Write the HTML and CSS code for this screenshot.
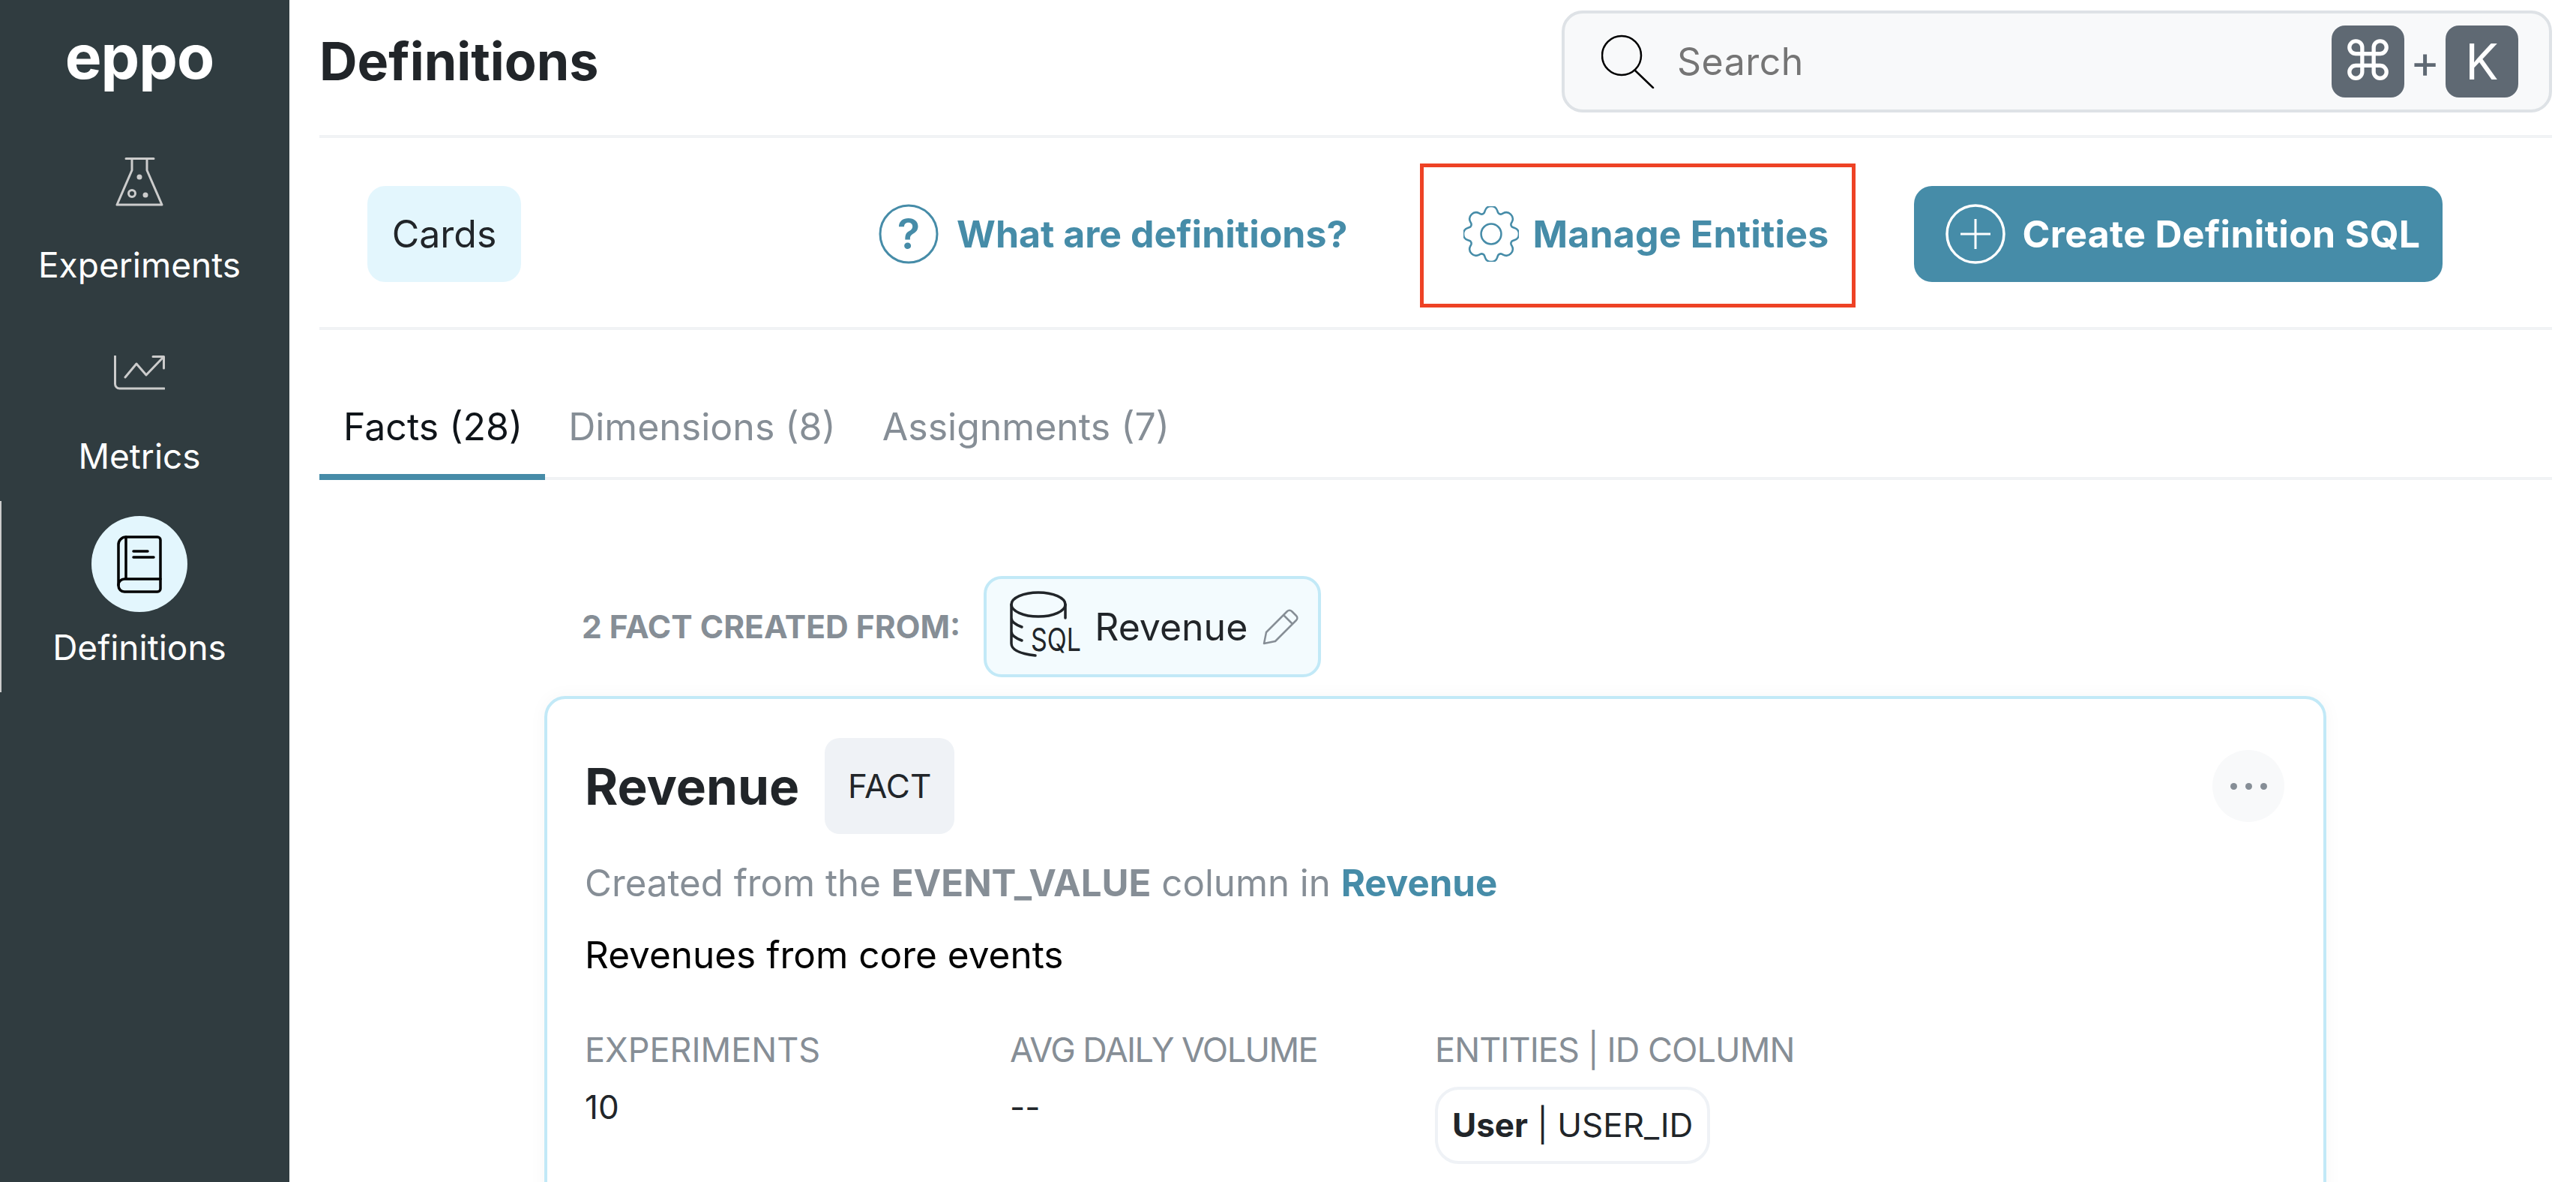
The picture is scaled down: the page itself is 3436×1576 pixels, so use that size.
FILE: index.html
```html
<!DOCTYPE html>
<html lang="en">
<head>
  <meta charset="UTF-8">
  <title>Definitions</title>
  <link rel="stylesheet" href="styles.css">
</head>
<body>
  <aside class="sidebar">
    <div class="logo">eppo</div>
    <nav class="nav">
      <a class="nav-item">
        <span class="nav-icon">
          <svg width="64" height="65" viewBox="0 0 64 65" fill="none" stroke="#ccc" stroke-width="3" stroke-linecap="round" stroke-linejoin="round">
            <path d="M14 1.5H51M22 2V17L2 63H62L42 17V2"/>
            <circle cx="32" cy="26" r="3.5" fill="#ccc" stroke="none"/>
            <circle cx="22" cy="48" r="4.5"/>
            <circle cx="40" cy="50" r="3.5" fill="#ccc" stroke="none"/>
          </svg>
        </span>
        <span class="nav-label">Experiments</span>
      </a>
      <a class="nav-item">
        <span class="nav-icon">
          <svg width="68" height="46" viewBox="0 0 68 46" fill="none" stroke="#ccc" stroke-width="3" stroke-linecap="round" stroke-linejoin="round">
            <path d="M1.5 1V38a6 6 0 0 0 6 6H67"/>
            <path d="M15 29L30 11L43 26L66 2M52 1.5H66.5V17"/>
          </svg>
        </span>
        <span class="nav-label">Metrics</span>
      </a>
      <a class="nav-item active">
        <span class="nav-icon">
          <svg width="62" height="77" viewBox="0 0 62 77" fill="none" stroke="#000" stroke-width="3.5" stroke-linecap="round" stroke-linejoin="round">
            <path d="M13 2H55a4 4 0 0 1 4 4V71a4 4 0 0 1-4 4H11a8 8 0 0 1-8-8V12A10 10 0 0 1 13 2Z"/>
            <path d="M13 2V58M59 58H11a8 8 0 0 0-8 8M23 21H42M23 29H50"/>
          </svg>
        </span>
        <span class="nav-label">Definitions</span>
      </a>
    </nav>
  </aside>

  <main class="main">
    <header class="topbar">
      <h1 class="page-title">Definitions</h1>
      <div class="search">
        <svg class="search-icon" width="72" height="72" viewBox="0 0 72 72" fill="none" stroke="#000" stroke-width="2.5" stroke-linecap="round">
          <circle cx="27" cy="28" r="26"/>
          <path d="M45 48L69 71"/>
        </svg>
        <span class="search-text">Search</span>
        <span class="key key-cmd">⌘</span>
        <span class="key-plus">+</span>
        <span class="key">K</span>
      </div>
    </header>

    <div class="toolbar">
      <span class="view-btn">Cards</span>
      <a class="link help-link">
        <svg width="80" height="80" viewBox="0 0 80 80" fill="none" stroke="#468ca8" stroke-width="3">
          <circle cx="40" cy="40" r="38"/>
          <text x="40" y="60" text-anchor="middle" class="icon-q">?</text>
        </svg>
        What are definitions?
      </a>
      <a class="link manage-link">
        <svg width="74" height="74" viewBox="0 0 16 16" fill="none" stroke="#468ca8" stroke-width="0.55">
          <circle cx="8" cy="8" r="2.9"/>
          <path d="M9.796 1.343c-.527-1.79-3.065-1.79-3.592 0l-.094.319a.873.873 0 0 1-1.255.52l-.292-.16c-1.64-.892-3.433.902-2.54 2.541l.159.292a.873.873 0 0 1-.52 1.255l-.319.094c-1.79.527-1.79 3.065 0 3.592l.319.094a.873.873 0 0 1 .52 1.255l-.16.292c-.892 1.64.901 3.434 2.541 2.54l.292-.159a.873.873 0 0 1 1.255.52l.094.319c.527 1.79 3.065 1.79 3.592 0l.094-.319a.873.873 0 0 1 1.255-.52l.292.16c1.64.893 3.434-.902 2.54-2.541l-.159-.292a.873.873 0 0 1 .52-1.255l.319-.094c1.79-.527 1.79-3.065 0-3.592l-.319-.094a.873.873 0 0 1-.52-1.255l.16-.292c.893-1.64-.902-3.433-2.541-2.54l-.292.159a.873.873 0 0 1-1.255-.52l-.094-.319z"/>
        </svg>
        Manage Entities
        <span class="annotation"></span>
      </a>
      <a class="create-btn">
        <svg width="80" height="80" viewBox="0 0 80 80" fill="none" stroke="#fff" stroke-width="3.5">
          <circle cx="40" cy="40" r="38"/>
          <path d="M40 20V60M20 40H60" stroke-width="3"/>
        </svg>
        Create Definition SQL
      </a>
    </div>

    <div class="tabs">
      <a class="tab active">Facts (28)</a>
      <a class="tab">Dimensions (8)</a>
      <a class="tab">Assignments (7)</a>
    </div>

    <section class="content">
      <div class="source-row">
        <span class="source-label">2 FACT CREATED FROM:</span>
        <span class="source-chip">
          <svg class="db-icon" width="120" height="96" viewBox="0 0 120 96" fill="none" stroke="#212529" stroke-width="3.5" stroke-linecap="round">
            <ellipse cx="38" cy="18" rx="36" ry="16"/>
            <path d="M2 18V70C2 79 16 84 34 86M2 36C2 41 8 45 16 48M2 54C2 59 8 63 16 66M74 18V36"/>
            <text x="28" y="80" class="icon-sql" textLength="67" lengthAdjust="spacingAndGlyphs">SQL</text>
          </svg>
          <span class="source-name">Revenue</span>
          <svg class="pencil" width="48" height="48" viewBox="0 0 48 48" fill="none" stroke="#868e96" stroke-width="2.5" stroke-linejoin="round">
            <path d="M2 46L5 31L33 3a4 4 0 0 1 6 0l6 6a4 4 0 0 1 0 6L17 43ZM28 8L40 20"/>
          </svg>
        </span>
      </div>

      <article class="card">
        <div class="card-head">
          <h2 class="card-title">Revenue</h2>
          <span class="tag">FACT</span>
          <button class="more-btn"><i></i><i></i><i></i></button>
        </div>
        <p class="card-source">Created from the <b>EVENT_VALUE</b> column in <b class="teal">Revenue</b></p>
        <p class="card-desc">Revenues from core events</p>
        <div class="stats">
          <div class="stat">
            <div class="stat-label">EXPERIMENTS</div>
            <div class="stat-value">10</div>
          </div>
          <div class="stat">
            <div class="stat-label tighter">AVG DAILY VOLUME</div>
            <div class="stat-value">--</div>
          </div>
          <div class="stat">
            <div class="stat-label tight">ENTITIES | ID COLUMN</div>
            <span class="entity"><b>User</b> | USER_ID</span>
          </div>
        </div>
      </article>
    </section>
  </main>
</body>
</html>
```

FILE: styles.css
```css
* {
  box-sizing: border-box;
}
body {
  margin: 0;
  height: 1576px;
  overflow: hidden;
  display: flex;
  background: #fff;
  color: #212529;
  font-family: Inter, "Liberation Sans", sans-serif;
  font-size: 46px;
}
b {
  font-weight: 700;
}
h1, h2, p {
  margin: 0;
}

/* sidebar */
.sidebar {
  width: 386px;
  flex: none;
  padding-right: 14px;
  background: #303c40;
  color: #fff;
}
.logo {
  height: 158px;
  padding-top: 28px;
  text-align: center;
  font-size: 82px;
  line-height: 96px;
  font-weight: 700;
  letter-spacing: -1px;
}
.nav-item {
  display: flex;
  flex-direction: column;
  align-items: center;
  height: 255px;
  padding-top: 20px;
}
.nav-item.active {
  box-shadow: inset 2px 0 0 #ccc;
}
.nav-icon {
  width: 128px;
  height: 128px;
  display: flex;
  align-items: center;
  justify-content: center;
  border-radius: 50%;
}
.active .nav-icon {
  background: #e3f6fd;
}
.nav-label {
  margin-top: 20px;
  font-size: 46px;
  line-height: 54px;
}

/* top */
.main {
  flex: 1;
  padding: 0 32px 0 40px;
}
.topbar {
  height: 184px;
  padding-top: 14px;
  display: flex;
  justify-content: space-between;
  border-bottom: 4px solid #f1f3f5;
}
.page-title {
  font-size: 70px;
  line-height: 136px;
  font-weight: 700;
}
.search {
  width: 1321px;
  height: 136px;
  display: flex;
  align-items: center;
  padding: 0 41px 0 49px;
  background: #f8f9fa;
  border: 4px solid #dee2e6;
  border-radius: 28px;
}
.search-icon {
  flex: none;
}
.search-text {
  margin-left: 29px;
  flex: 1;
  color: #757575;
  font-size: 50px;
  letter-spacing: 0.5px;
}
.key {
  width: 97px;
  height: 96px;
  display: flex;
  align-items: center;
  justify-content: center;
  background: #5f6973;
  border-radius: 18px;
  color: #fff;
  font-size: 66px;
}
.key-cmd {
  font-family: "DejaVu Sans", sans-serif;
  font-size: 72px;
}
.key-plus {
  width: 55px;
  text-align: center;
  color: #5f6973;
  font-size: 60px;
}

/* toolbar */
.toolbar {
  height: 256px;
  padding: 64px 0 0 64px;
  display: flex;
  align-items: flex-start;
  border-bottom: 4px solid #f1f3f5;
}
.view-btn {
  width: 205px;
  height: 128px;
  display: flex;
  align-items: center;
  justify-content: center;
  background: #e3f6fd;
  border-radius: 24px;
  font-size: 50px;
}
.link {
  height: 128px;
  display: flex;
  align-items: center;
  gap: 24px;
  color: #468ca8;
  font-size: 50px;
  font-weight: 700;
  white-space: nowrap;
}
.help-link {
  margin-left: 477px;
}
.manage-link {
  position: relative;
  margin-left: 155px;
  gap: 18px;
  letter-spacing: 0.2px;
}
.annotation {
  position: absolute;
  left: -58px;
  right: -36px;
  top: -30px;
  bottom: -34px;
  border: 5px solid #ee4225;
}
.create-btn {
  height: 128px;
  width: 705px;
  margin-left: 114px;
  padding-left: 42px;
  display: flex;
  align-items: center;
  gap: 22px;
  background: #468ca8;
  border-radius: 24px;
  color: #fff;
  font-size: 50px;
  font-weight: 700;
  letter-spacing: 0.3px;
  white-space: nowrap;
}
.icon-q {
  fill: #468ca8;
  stroke: none;
  font-size: 56px;
  font-weight: 600;
}
.icon-sql {
  fill: #212529;
  stroke: none;
  font-size: 42px;
  font-weight: 400;
}

/* tabs */
.tabs {
  height: 200px;
  display: flex;
  align-items: stretch;
  border-bottom: 4px solid #f1f3f5;
}
.tab {
  display: flex;
  align-items: flex-end;
  height: 200px;
  padding: 0 31px 41px;
  color: #868e96;
  font-size: 50px;
  line-height: 60px;
}
.tab.active {
  padding: 0 30px 33px 32px;
  color: #0f1419;
  border-bottom: 8px solid #468ca8;
}

/* content */
.content {
  padding: 128px 0 0 300px;
}
.source-row {
  padding-left: 50px;
  display: flex;
  align-items: center;
  gap: 31px;
}
.source-label {
  color: #868e96;
  font-size: 42.5px;
  font-weight: 700;
}
.source-chip {
  height: 135px;
  padding: 0 26px 0 31px;
  display: flex;
  align-items: center;
  gap: 18px;
  background: #f3fbfe;
  border: 4px solid #c2e9f7;
  border-radius: 24px;
}
.db-icon {
  margin-right: -25px;
}
.source-name {
  font-size: 50px;
}
.pencil {
  margin-left: 2px;
}
.card {
  width: 2377px;
  height: 800px;
  margin-top: 25px;
  padding: 52px 52px 0 50px;
  background: #fff;
  border: 4px solid #c2e9f7;
  border-radius: 28px;
  box-shadow: 0 0 24px rgba(0, 0, 0, 0.04);
}
.card-head {
  display: flex;
  align-items: center;
  gap: 34px;
}
.card-title {
  font-size: 67.5px;
  font-weight: 700;
}
.tag {
  width: 173px;
  height: 128px;
  display: flex;
  align-items: center;
  justify-content: center;
  background: #eff2f6;
  border-radius: 20px;
  font-size: 44px;
}
.more-btn {
  width: 96px;
  height: 96px;
  margin-left: auto;
  display: flex;
  align-items: center;
  justify-content: center;
  gap: 11px;
  padding: 0;
  background: #f8f9fa;
  border: 0;
  border-radius: 50%;
}
.more-btn i {
  width: 9px;
  height: 9px;
  background: #868e96;
  border-radius: 50%;
}
.card-source {
  margin-top: 35px;
  color: #868e96;
  font-size: 49.2px;
  line-height: 60px;
}
.teal {
  color: #468ca8;
}
.card-desc {
  margin-top: 36px;
  color: #000;
  font-size: 49.5px;
  line-height: 60px;
}
.stats {
  margin-top: 70px;
  display: flex;
}
.stat {
  width: 567px;
}
.stat-label {
  color: #868e96;
  font-size: 45px;
  line-height: 54px;
}
.tight {
  letter-spacing: -0.9px;
}
.tighter {
  letter-spacing: -1.6px;
}
.stat-value {
  margin-top: 22px;
  font-size: 44px;
  line-height: 54px;
}
.entity {
  display: inline-block;
  height: 103px;
  margin-top: 22px;
  padding: 0 19px;
  border: 4px solid #eff2f6;
  border-radius: 32px;
  font-size: 44px;
  line-height: 95px;
}
```
